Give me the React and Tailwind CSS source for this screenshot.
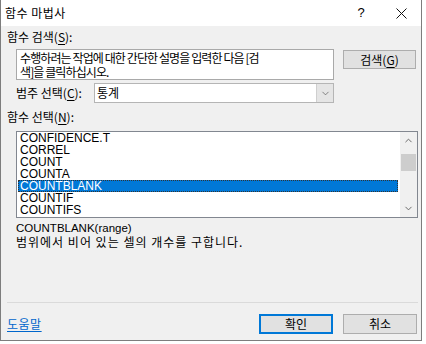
import { ChevronDown, ChevronUp } from "lucide-react";

const ko = { fontFamily: '"Noto Sans CJK KR", "Noto Sans", sans-serif' };
const lat = { fontFamily: '"Liberation Sans", Arial, sans-serif' };

const functions = [
  "CONFIDENCE.T",
  "CORREL",
  "COUNT",
  "COUNTA",
  "COUNTBLANK",
  "COUNTIF",
  "COUNTIFS",
];

const Mn = ({ children }) => <span className="underline underline-offset-2">{children}</span>;

export default function App() {
  return (
    <div className="w-[426px] h-[344px] bg-white overflow-hidden text-[12px] text-black" style={ko}>
      <div className="w-[422px] h-[341px] flex flex-col border-x border-b border-[#7d7d7d] bg-[#f0f0f0]">
        {/* title bar */}
        <div className="h-[26px] bg-white flex items-center pl-[4px] shrink-0">
          <span className="leading-[14px] tracking-[0.5px]">함수 마법사</span>
          <span className="ml-auto w-[20px] text-center text-[13px]" style={lat}>?</span>
          <svg className="ml-[25px] mr-[14px]" width="11" height="11" viewBox="0 0 11 11">
            <path d="M0.5 0.5 L10.5 10.5 M10.5 0.5 L0.5 10.5" stroke="#111" strokeWidth="1" />
          </svg>
        </div>

        {/* search */}
        <div className="pl-[6px] pt-[4px] leading-[14px]">
          함수 검색(<Mn>S</Mn>):
        </div>
        <div className="flex items-start ml-[15px] mt-[5px] gap-[9px]">
          <div className="w-[318px] h-[31px] bg-white border border-[#a9a9a9] px-[3px] pt-[1px] leading-[14px] tracking-[-0.9px] whitespace-nowrap">
            수행하려는 작업에 대한 간단한 설명을 입력한 다음 [검
            <br />
            색]을 클릭하십시오.
          </div>
          <button className="w-[73px] h-[19px] mt-[1px] bg-[#e1e1e1] border border-[#adadad] leading-[14px]">
            검색(<Mn>G</Mn>)
          </button>
        </div>

        {/* category */}
        <div className="flex items-center ml-[15px] mt-[3px]">
          <span className="w-[78px] leading-[14px]">
            범주 선택(<Mn>C</Mn>):
          </span>
          <div className="w-[240px] h-[20px] bg-white border border-[#b5b5b5] flex items-center">
            <span className="pl-[2px] leading-[14px]">통계</span>
            <div className="ml-auto h-full w-[17px] bg-[#e5e5e5] border-l border-[#cfcfcf] flex items-center justify-center">
              <ChevronDown size={11} color="#555" strokeWidth={1.5} />
            </div>
          </div>
        </div>

        {/* function list */}
        <div className="pl-[6px] mt-[7px] leading-[14px]">
          함수 선택(<Mn>N</Mn>):
        </div>
        <div className="ml-[15px] mt-[7px] w-[402px] h-[87px] bg-white border border-[#828790] flex">
          <div className="flex-1" style={lat}>
            {functions.map((f) => (
              <div
                key={f}
                className={
                  f === "COUNTBLANK"
                    ? "h-[12px] leading-[12px] ml-[1px] mr-[2px] pl-[2px] bg-[#0078d7] text-white outline outline-1 outline-dotted outline-[#333] -outline-offset-1"
                    : "h-[12px] leading-[12px] ml-[1px] mr-[2px] pl-[2px]"
                }
              >
                {f}
              </div>
            ))}
          </div>
          <div className="w-[17px] bg-[#f0f0f0] flex flex-col items-center">
            <div className="h-[17px] flex items-center justify-center">
              <ChevronUp size={11} color="#606060" strokeWidth={2} />
            </div>
            <div className="mt-[5px] w-[15px] h-[17px] bg-[#cdcdcd]" />
            <div className="mt-auto h-[17px] flex items-center justify-center">
              <ChevronDown size={11} color="#606060" strokeWidth={2} />
            </div>
          </div>
        </div>

        {/* description */}
        <div className="ml-[15px] mt-[3px] text-[11.5px] leading-[14px]" style={lat}>
          COUNTBLANK(range)
        </div>
        <div className="ml-[15px] leading-[14px] tracking-[1px]">범위에서 비어 있는 셀의 개수를 구합니다.</div>

        {/* footer */}
        <div className="mt-auto ml-[6px] w-[411px] h-px bg-[#dadada]" />
        <div className="flex items-center ml-[6px] mt-[11px] mb-[6px]">
          <a className="text-[#0066cc] underline underline-offset-2 leading-[14px] tracking-[0.5px]">도움말</a>
          <button className="ml-auto w-[74px] h-[20px] bg-[#e1e1e1] border-2 border-[#0078d7] leading-[14px]">
            확인
          </button>
          <button className="ml-[10px] mr-[4px] w-[74px] h-[20px] bg-[#e1e1e1] border border-[#adadad] leading-[14px]">
            취소
          </button>
        </div>
      </div>
    </div>
  );
}
